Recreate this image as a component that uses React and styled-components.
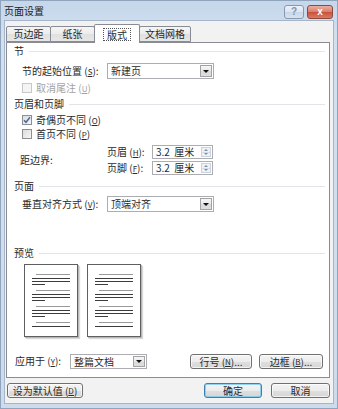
import React from "react";
import styled, { createGlobalStyle, css } from "styled-components";

const GlobalStyle = createGlobalStyle`
  html, body {
    margin: 0;
    padding: 0;
    background: #ffffff;
  }
  body {
    font-family: "Noto Sans CJK SC", "Liberation Sans", sans-serif;
    font-size: 10px;
    color: #2a2a2a;
  }
  * {
    box-sizing: border-box;
  }
`;

const Dialog = styled.div`
  width: 338px;
  height: 409px;
  display: flex;
  flex-direction: column;
  border: 1px solid #8fa4bd;
  background: linear-gradient(#c6d7eb, #d3e0ef 40px, #cddbec);
`;

const TitleBar = styled.div`
  height: 19px;
  display: flex;
  align-items: center;
  padding: 0 4px 0 3px;
`;

const Title = styled.div`
  flex: 1;
  font-size: 10px;
  color: #222;
  line-height: 12px;
  padding-top: 1px;
`;

const CaptionButton = styled.div`
  height: 14px;
  width: ${(p) => p.$w}px;
  margin-top: 3px;
  border: 1px solid ${(p) => (p.$close ? "#8a4a40" : "#8798b0")};
  border-radius: 3px;
  display: flex;
  align-items: center;
  justify-content: center;
  font-family: "Liberation Sans", sans-serif;
  font-weight: bold;
  font-size: 10px;
  line-height: 1;
  ${(p) =>
    p.$close
      ? css`
          background: linear-gradient(#eab0a3, #d97d6a 50%, #c9503a 51%, #dc7a62);
          color: #ffffff;
          margin-left: 3px;
        `
      : css`
          background: linear-gradient(#eef3f9, #dae4f0 50%, #c8d6e8 51%, #d8e3f0);
          color: #8194ad;
        `}
`;

const Body = styled.div`
  flex: 1;
  display: flex;
  flex-direction: column;
  margin: 0 3px 4px 3px;
  padding: 3px 3px 5px 1px;
  background: #f2f2f2;
  border: 1px solid #a6b6ca;
`;

const Tabs = styled.div`
  height: 18px;
  display: flex;
  align-items: flex-end;
  position: relative;
  z-index: 1;
`;

const Tab = styled.div`
  width: ${(p) => p.$w}px;
  height: ${(p) => (p.$active ? 19 : 16)}px;
  margin-left: -1px;
  margin-bottom: ${(p) => (p.$active ? -1 : 0)}px;
  border: 1px solid #898c95;
  border-bottom: ${(p) => (p.$active ? "none" : "1px solid #898c95")};
  border-radius: 2px 2px 0 0;
  background: ${(p) =>
    p.$active ? "#ffffff" : "linear-gradient(#f5f5f5, #ececec 50%, #e0e0e0 51%, #e7e7e7)"};
  display: flex;
  align-items: center;
  justify-content: center;
  line-height: 12px;
  &:first-child {
    margin-left: 0;
  }
`;

const Focus = styled.span`
  border: 1px dotted #555;
  padding: 0 3px;
  line-height: 11px;
`;

const Panel = styled.div`
  height: 336px;
  display: flex;
  flex-direction: column;
  border: 1px solid #898c95;
  background: #ffffff;
  padding: 2px 4px 8px 7px;
`;

const GroupHeader = styled.div`
  height: 12px;
  margin-top: ${(p) => p.$mt || 0}px;
  display: flex;
  align-items: center;
  gap: 5px;
  line-height: 12px;
  &::after {
    content: "";
    flex: 1;
    height: 1px;
    background: #e2e4e7;
  }
`;

const FieldRow = styled.div`
  display: flex;
  align-items: center;
  margin-top: ${(p) => p.$mt || 0}px;
  margin-left: ${(p) => p.$ml ?? 8}px;
`;

const Label = styled.div`
  width: ${(p) => p.$w}px;
  flex: none;
  line-height: 12px;
  white-space: nowrap;
  color: ${(p) => (p.$disabled ? "#a3a3a3" : "inherit")};
`;

const Key = styled.span`
  font-size: 8px;
  text-decoration: underline;
  text-underline-offset: 1px;
`;

const SelectBox = styled.div`
  width: ${(p) => p.$w}px;
  height: ${(p) => p.$h || 16}px;
  border: 1px solid #abadb3;
  background: #ffffff;
  display: flex;
  align-items: center;
  padding: 1px 1px 1px 3px;
`;

const SelectText = styled.div`
  flex: 1;
  line-height: 12px;
  white-space: pre;
`;

const DropButton = styled.div`
  width: 12px;
  height: 100%;
  border: 1px solid #a3a3a3;
  background: linear-gradient(#f6f6f6, #e8e8e8 50%, #d9d9d9 51%, #dedede);
  display: flex;
  align-items: center;
  justify-content: center;
  &::after {
    content: "";
    border-left: 3px solid transparent;
    border-right: 3px solid transparent;
    border-top: 3px solid #111;
  }
`;

const Select = ({ w, h, value }) => (
  <SelectBox $w={w} $h={h}>
    <SelectText>{value}</SelectText>
    <DropButton />
  </SelectBox>
);

const CheckRow = styled.div`
  height: 12px;
  display: flex;
  align-items: center;
  gap: 4px;
  margin-top: ${(p) => p.$mt || 0}px;
  margin-left: 8px;
  line-height: 12px;
  color: ${(p) => (p.$disabled ? "#a3a3a3" : "inherit")};
`;

const Box = styled.div`
  width: 10px;
  height: 10px;
  border: 1px solid ${(p) => (p.$disabled ? "#c8c8c8" : "#8e8f8f")};
  background: ${(p) =>
    p.$disabled ? "#f4f4f4" : "linear-gradient(135deg, #dcdcdc, #f6f6f6)"};
  display: flex;
  align-items: center;
  justify-content: center;
`;

const Checkbox = ({ checked, disabled, children, mt }) => (
  <CheckRow $mt={mt} $disabled={disabled}>
    <Box $disabled={disabled}>
      {checked && (
        <svg width="8" height="8" viewBox="0 0 8 8">
          <path d="M1 4.2 L3 6.3 L7 1.2" fill="none" stroke="#4a6aa3" strokeWidth="1.5" />
        </svg>
      )}
    </Box>
    <span>{children}</span>
  </CheckRow>
);

const Distance = styled.div`
  display: flex;
  align-items: center;
  margin-top: 5px;
  margin-left: 6px;
`;

const SpinColumn = styled.div`
  display: flex;
  flex-direction: column;
  gap: 2px;
`;

const SpinBox = styled.div`
  width: 61px;
  height: 14px;
  border: 1px solid #abadb3;
  background: #ffffff;
  display: flex;
  align-items: center;
  padding: 1px 1px 1px 3px;
`;

const SpinButtons = styled.div`
  width: 10px;
  height: 100%;
  display: flex;
  flex-direction: column;
  border: 1px solid #c9d2dd;
  background: #eef2f7;
`;

const SpinHalf = styled.div`
  flex: 1;
  display: flex;
  align-items: center;
  justify-content: center;
  &::after {
    content: "";
    border-left: 2px solid transparent;
    border-right: 2px solid transparent;
    ${(p) =>
      p.$up
        ? css`border-bottom: 2px solid #7e8ea5;`
        : css`border-top: 2px solid #7e8ea5;`}
  }
  & + & {
    border-top: 1px solid #d5dce6;
  }
`;

const Spin = ({ value }) => (
  <SpinBox>
    <SelectText>{value}</SelectText>
    <SpinButtons>
      <SpinHalf $up />
      <SpinHalf />
    </SpinButtons>
  </SpinBox>
);

const Pages = styled.div`
  display: flex;
  gap: 9px;
  margin-top: 5px;
  margin-left: 10px;
`;

const Page = styled.div`
  width: 54px;
  height: 73px;
  border: 1px solid #5f5f5f;
  background: #ffffff;
  box-shadow: 1px 1px 0 #b8b8b8, 2px 2px 1px #d8d8d8;
`;

const paragraphs = [0, 16, 32, 48];

const PageLines = () => (
  <svg width="52" height="71" viewBox="0 0 52 71">
    {paragraphs.map((y0, i) => (
      <g key={i} shapeRendering="crispEdges">
        <rect x="11" y={y0 + 9} width="34" height="1" fill="#9a9a9a" />
        <rect x="7" y={y0 + 13} width="38" height="1" fill="#3c3c3c" />
        {i < 3 && <rect x="7" y={y0 + 16} width="38" height="1" fill="#3c3c3c" />}
        {i < 3 && <rect x="7" y={y0 + 19} width="13" height="1" fill="#3c3c3c" />}
      </g>
    ))}
  </svg>
);

const BottomRow = styled.div`
  display: flex;
  align-items: center;
  margin-top: auto;
  margin-left: 1px;
  margin-right: 2px;
`;

const Spacer = styled.div`
  flex: 1;
`;

const Button = styled.div`
  width: ${(p) => p.$w}px;
  height: 15px;
  margin-left: ${(p) => p.$ml || 0}px;
  border: 1px solid ${(p) => (p.$default ? "#3c7fb1" : "#707070")};
  border-radius: 3px;
  background: linear-gradient(#f4f4f4, #ececec 50%, #dfdfdf 51%, #d6d6d6);
  box-shadow: inset 0 0 0 1px
    ${(p) => (p.$default ? "rgba(120, 200, 240, 0.8)" : "rgba(255, 255, 255, 0.7)")};
  display: flex;
  align-items: center;
  justify-content: center;
  line-height: 12px;
  white-space: nowrap;
`;

const Footer = styled.div`
  display: flex;
  align-items: center;
  margin-top: 5px;
  padding-left: 1px;
`;

export default function App() {
  return (
    <>
      <GlobalStyle />
      <Dialog>
        <TitleBar>
          <Title>页面设置</Title>
          <CaptionButton $w={20}>?</CaptionButton>
          <CaptionButton $w={26} $close>
            x
          </CaptionButton>
        </TitleBar>
        <Body>
          <Tabs>
            <Tab $w={45}>页边距</Tab>
            <Tab $w={45}>纸张</Tab>
            <Tab $w={46} $active>
              <Focus>版式</Focus>
            </Tab>
            <Tab $w={52}>文档网格</Tab>
          </Tabs>
          <Panel>
            <GroupHeader>节</GroupHeader>
            <FieldRow $mt={6}>
              <Label $w={85}>
                节的起始位置 (<Key>S</Key>):
              </Label>
              <Select w={107} value="新建页" />
            </FieldRow>
            <Checkbox mt={3} disabled>
              取消尾注 (<Key>U</Key>)
            </Checkbox>

            <GroupHeader $mt={4}>页眉和页脚</GroupHeader>
            <Checkbox mt={4} checked>
              奇偶页不同 (<Key>O</Key>)
            </Checkbox>
            <Checkbox mt={2}>
              首页不同 (<Key>P</Key>)
            </Checkbox>
            <Distance>
              <Label $w={87}>距边界:</Label>
              <SpinColumn>
                <FieldRow $ml={0}>
                  <Label $w={45}>
                    页眉 (<Key>H</Key>):
                  </Label>
                  <Spin value="3.2  厘米" />
                </FieldRow>
                <FieldRow $ml={0}>
                  <Label $w={45}>
                    页脚 (<Key>F</Key>):
                  </Label>
                  <Spin value="3.2  厘米" />
                </FieldRow>
              </SpinColumn>
            </Distance>

            <GroupHeader $mt={5}>页面</GroupHeader>
            <FieldRow $mt={4}>
              <Label $w={85}>
                垂直对齐方式 (<Key>V</Key>):
              </Label>
              <Select w={107} value="顶端对齐" />
            </FieldRow>

            <GroupHeader $mt={35}>预览</GroupHeader>
            <Pages>
              <Page>
                <PageLines />
              </Page>
              <Page>
                <PageLines />
              </Page>
            </Pages>

            <BottomRow>
              <Label $w={55}>
                应用于 (<Key>Y</Key>):
              </Label>
              <Select w={77} h={15} value="整篇文档" />
              <Spacer />
              <Button $w={62}>
                行号 (<Key>N</Key>)...
              </Button>
              <Button $w={64} $ml={7}>
                边框 (<Key>B</Key>)...
              </Button>
            </BottomRow>
          </Panel>
          <Footer>
            <Button $w={76}>
              设为默认值 (<Key>D</Key>)
            </Button>
            <Spacer />
            <Button $w={58} $default>
              确定
            </Button>
            <Button $w={59} $ml={9}>
              取消
            </Button>
          </Footer>
        </Body>
      </Dialog>
    </>
  );
}
